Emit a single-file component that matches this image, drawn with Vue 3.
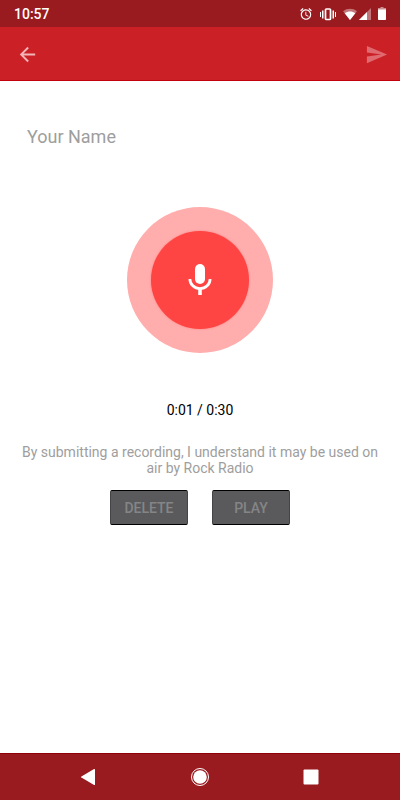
<script setup>
import { ref } from 'vue'

const name = ref('')
const elapsed = ref('0:01')
const limit = '0:30'
</script>

<template>
  <div class="screen">
    <div class="status">
      <span class="clock">10:57</span>
      <div class="indicators">
        <svg class="alarm" viewBox="0 0 24 24" width="14" height="14" aria-hidden="true">
          <path fill="currentColor" d="M22 5.720l-4.600-3.860-1.290 1.530 4.600 3.860L22 5.720zM7.880 3.390L6.600 1.860 2 5.710l1.290 1.530 4.590-3.850zM12.500 8H11v6l4.750 2.850.750-1.230-4-2.370V8zM12 4c-4.970 0-9 4.030-9 9s4.020 9 9 9a9 9 0 0 0 0-18zm0 16c-3.870 0-7-3.130-7-7s3.130-7 7-7 7 3.130 7 7-3.130 7-7 7z" />
        </svg>
        <svg class="vibrate" viewBox="0 0 18 14" width="18" height="14" aria-hidden="true">
          <path fill="currentColor" d="M1 5h1v5H1zM3 3.500h1.500v8H3zM16 5h1v5h-1zM13.500 3.500H15v8h-1.500z" />
          <rect x="6.500" y="2" width="5" height="10.500" rx=".8" fill="none" stroke="currentColor" stroke-width="1.700" />
        </svg>
        <svg class="wifi" viewBox="0 0 14 12" width="14" height="12" aria-hidden="true">
          <path fill="currentColor" opacity=".4" d="M0 3.300C4 0 10 0 14 3.300L7 12z" />
          <path fill="currentColor" d="M1.700 5.200C4.800 2.900 9.200 2.900 12.300 5.200L7 12z" />
        </svg>
        <svg class="signal" viewBox="0 0 12 12" width="12" height="12" aria-hidden="true">
          <path fill="currentColor" opacity=".4" d="M12 0v12H0z" />
          <path fill="currentColor" d="M8 4v8H0z" />
        </svg>
        <svg class="battery" viewBox="0 0 8 13" width="8" height="13" aria-hidden="true">
          <path fill="currentColor" opacity=".5" d="M2.500 0h3v1H8v2H0V1h2.500z" />
          <path fill="currentColor" d="M0 2.500h8v9.700a.8.8 0 0 1-.8.8H.8a.8.8 0 0 1-.8-.8z" />
        </svg>
      </div>
    </div>

    <header class="toolbar">
      <button class="icon-button" type="button" aria-label="Back">
        <svg viewBox="0 0 24 24" width="23" height="23" aria-hidden="true">
          <path fill="currentColor" d="M20 11H7.830l5.590-5.590L12 4l-8 8 8 8 1.410-1.410L7.830 13H20z" />
        </svg>
      </button>
      <button class="icon-button send" type="button" aria-label="Send">
        <svg viewBox="0 0 24 24" width="23" height="23" aria-hidden="true">
          <path fill="currentColor" d="M2.010 21L23 12 2.010 3 2 10l15 2-15 2z" />
        </svg>
      </button>
    </header>

    <main class="content">
      <input v-model="name" class="name" type="text" placeholder="Your Name" aria-label="Your Name" />

      <button class="record" type="button" aria-label="Record">
        <span class="record-core">
          <svg viewBox="0 0 24 32" width="24" height="32" aria-hidden="true">
            <rect x="7" y="0" width="10" height="20" rx="5" fill="currentColor" />
            <path fill="none" stroke="currentColor" stroke-width="2.800" d="M1.900 15a10.100 9.700 0 0 0 20.200 0" />
            <path fill="none" stroke="currentColor" stroke-width="3.600" d="M12 25v6" />
          </svg>
        </span>
      </button>

      <p class="time">{{ elapsed }} / {{ limit }}</p>
      <p class="terms">By submitting a recording, I understand it may be used on air by Rock Radio</p>

      <div class="actions">
        <button class="action" type="button">DELETE</button>
        <button class="action" type="button">PLAY</button>
      </div>
    </main>

    <nav class="system-nav" aria-label="System">
      <button class="nav-button" type="button" aria-label="Go back">
        <svg viewBox="0 0 20 20" width="20" height="20" aria-hidden="true">
          <path fill="currentColor" d="M16 2.600v14.800a.6.6 0 0 1-.9.500L2.400 10.500a.6.6 0 0 1 0-1L15.100 2.100a.6.6 0 0 1 .9.500z" />
        </svg>
      </button>
      <button class="nav-button" type="button" aria-label="Home">
        <svg viewBox="0 0 20 20" width="20" height="20" aria-hidden="true">
          <circle cx="10" cy="10" r="8.500" fill="none" stroke="currentColor" stroke-width="1" />
          <circle cx="10" cy="10" r="6.800" fill="currentColor" />
        </svg>
      </button>
      <button class="nav-button" type="button" aria-label="Recent apps">
        <svg viewBox="0 0 20 20" width="20" height="20" aria-hidden="true">
          <rect x="2.500" y="2.500" width="15" height="15" rx="1" fill="currentColor" />
        </svg>
      </button>
    </nav>
  </div>
</template>

<style>
body {
  background: #fff;
}
</style>

<style scoped>
.screen {
  display: flex;
  flex-direction: column;
  min-height: 100vh;
  font-family: Roboto, "Liberation Sans", sans-serif;
}

.screen * {
  box-sizing: border-box;
}

button {
  padding: 0;
  border: 0;
  background: none;
  color: inherit;
  font-family: inherit;
}

svg {
  display: block;
}

.status {
  display: flex;
  align-items: center;
  justify-content: space-between;
  height: 27px;
  padding: 0 14px;
  background: #991a1f;
  color: #fff;
}

.clock {
  font-size: 14px;
  font-weight: 500;
  line-height: 20px;
}

.indicators {
  display: flex;
  align-items: center;
}

.vibrate {
  margin-left: 6px;
}

.wifi {
  margin-left: 6px;
}

.signal {
  margin-left: 2px;
}

.battery {
  margin-left: 7px;
}

.toolbar {
  display: flex;
  align-items: center;
  justify-content: space-between;
  height: 54px;
  padding: 1px 12px 0 16px;
  border-bottom: 1px solid #c4000a;
  background: #cc2027;
}

.icon-button {
  color: #f3b5b8;
}

.send {
  color: #df6a70;
}

.content {
  display: flex;
  flex: 1;
  flex-direction: column;
  align-items: center;
  padding: 40px 20px;
}

.name {
  align-self: stretch;
  height: 30px;
  padding: 0 7px;
  border: 0;
  outline: 0;
  background: transparent;
  color: #222;
  font-family: inherit;
  font-size: 18px;
}

.name::placeholder {
  color: #9e9e9e;
  opacity: 1;
}

.record {
  display: grid;
  place-items: center;
  width: 146px;
  height: 146px;
  margin-top: 56px;
  border-radius: 50%;
  background: #ffadad;
}

.record-core {
  display: grid;
  place-items: center;
  width: 98px;
  height: 98px;
  border-radius: 50%;
  background: #ff4444;
  box-shadow: 0 0 2px #f77;
  color: #fff;
}

.time,
.terms {
  margin: 0;
  font-size: 14px;
  line-height: 16px;
  text-align: center;
}

.time {
  margin-top: 49px;
  color: #000;
}

.terms {
  margin-top: 26px;
  color: #9e9e9e;
}

.actions {
  display: flex;
  gap: 24px;
  margin-top: 14px;
}

.action {
  width: 78px;
  height: 35px;
  border: 1px solid #444446;
  border-top-color: #000;
  border-bottom-color: #000;
  border-radius: 2px;
  background: #5a5a5c;
  color: #858587;
  font-size: 14px;
  font-weight: 500;
}

.system-nav {
  display: flex;
  justify-content: center;
  gap: 91px;
  height: 47px;
  border-top: 1px solid #8d0008;
  background: #991a1f;
  color: #fff;
}
</style>
